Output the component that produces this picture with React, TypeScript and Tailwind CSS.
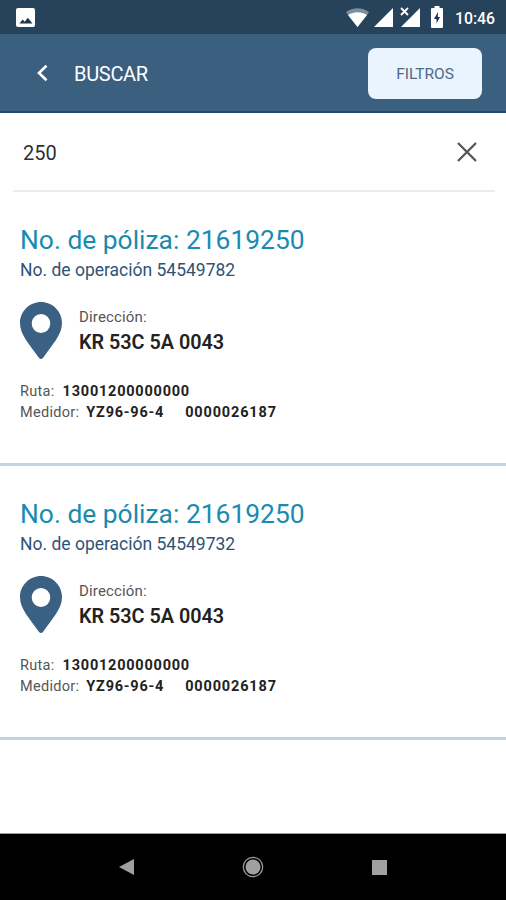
import type { ReactNode } from "react";

interface Policy {
  policy: string;
  operation: string;
  address: string;
  route: string;
  meter: string;
  serial: string;
}

const results: Policy[] = [
  {
    policy: "21619250",
    operation: "54549782",
    address: "KR 53C 5A 0043",
    route: "13001200000000",
    meter: "YZ96-96-4",
    serial: "0000026187",
  },
  {
    policy: "21619250",
    operation: "54549732",
    address: "KR 53C 5A 0043",
    route: "13001200000000",
    meter: "YZ96-96-4",
    serial: "0000026187",
  },
];

// Status Bar Component
function StatusBar() {
  return (
    <div className="h-[34px] bg-[#27435c] flex items-center pl-4 pr-[10px] text-white">
      <svg className="w-[19px] h-[19px]" viewBox="0 0 19 19">
        <rect width="19" height="19" rx="2" fill="#fff" />
        <path d="M3.500 15.500l3-4 2.300 2.300 3-4 4.700 5.700z" fill="#1d3650" />
      </svg>
      <svg className="w-[23px] h-[19px] ml-auto mt-px" viewBox="0 0 23 19">
        <path d="M0 4.200C6.500-1 16.500-1 23 4.200L11.500 19z" fill="#7b8fa2" />
        <path d="M2 7c6-3.600 13-3.600 19 0l-9.500 12z" fill="#fff" />
      </svg>
      <svg className="w-[19px] h-[19px] ml-[5px] mt-px" viewBox="0 0 19 19">
        <path d="M0 19L19 0v19z" fill="#fff" />
      </svg>
      <svg className="w-[20px] h-[20px] ml-[7px]" viewBox="0 0 20 20">
        <path d="M1 20L20 1v19z" fill="#fff" />
        <path d="M0 0h10.500L0 10.500z" fill="#27435c" />
        <path d="M1 1l7 7M8 1l-7 7" stroke="#fff" strokeWidth="1.800" />
      </svg>
      <svg className="w-[12px] h-[22px] ml-[11px]" viewBox="0 0 12 22">
        <path d="M3.500 0h5v2H11a1 1 0 011 1v18a1 1 0 01-1 1H1a1 1 0 01-1-1V3a1 1 0 011-1h2.500z" fill="#fff" />
        <path d="M7 6l-4 7h2.500v4.500L9 11H6.800z" fill="#1d2f55" />
      </svg>
      <span className="ml-[12px] mt-[3px] w-[41px] text-[15.800px] leading-none font-medium whitespace-nowrap">
        10:46
      </span>
    </div>
  );
}

// Header Component
function Header() {
  return (
    <header className="h-[79px] bg-[#3b5f7e] border-b-2 border-[#214a6c] flex items-center pl-[36px] pr-6">
      <svg className="w-3 h-[18px] mt-px" viewBox="0 0 12 18" fill="none">
        <path d="M10.500 1.800L3 9l7.500 7.200" stroke="#fff" strokeWidth="2.600" />
      </svg>
      <h1 className="ml-[26px] mt-[3px] text-[20px] leading-none tracking-[-0.3px] text-white">BUSCAR</h1>
      <button className="ml-auto mt-[2px] pt-[3px] w-[114px] h-[51px] rounded-[8px] bg-[#e9f4ff] text-[15.500px] text-[#4f6a82]">
        FILTROS
      </button>
    </header>
  );
}

// Search Component
function SearchField() {
  return (
    <div className="h-[79px] ml-[13px] mr-[11px] border-b-2 border-[#ececec] flex items-center pl-[10px] pr-[18px]">
      <span className="mt-[2px] text-[20px] leading-none text-[#303030]">250</span>
      <svg className="size-5 ml-auto" viewBox="0 0 20 20">
        <path d="M1 1l18 18M19 1L1 19" stroke="#555" strokeWidth="2.300" />
      </svg>
    </div>
  );
}

interface DetailLineProps {
  label: string;
  children: ReactNode;
}

// Detail Line Component
function DetailLine({ label, children }: DetailLineProps) {
  return (
    <p className="flex text-[14.500px] leading-[21px] text-[#555]">
      <span className="tracking-[0.3px]">{label}</span>
      {children}
    </p>
  );
}

function PolicyCard({ policy, operation, address, route, meter, serial }: Policy) {
  return (
    <li className="h-[274px] border-b-[3px] border-[#c3d4e1] pl-5 pt-[32px] whitespace-nowrap">
      <h2 className="text-[26.400px] leading-8 text-[#1a8bb0]">No. de póliza: {policy}</h2>
      <p className="text-[17.500px] leading-7 text-[#2f5375]">No. de operación {operation}</p>

      {/* Address */}
      <div className="mt-[18px] flex">
        <svg className="w-[42px] h-[57px]" viewBox="0 0 43 57" preserveAspectRatio="none">
          <path
            d="M21.500 0C9.600 0 0 9.400 0 21c0 12 10 21.500 19.300 34.800a2.600 2.600 0 004.400 0C33 42.500 43 33 43 21 43 9.400 33.400 0 21.500 0zm0 12a9.500 9.500 0 110 19 9.500 9.500 0 010-19z"
            fill="#3a6184"
            fillRule="evenodd"
          />
        </svg>
        <div className="ml-[17px] pt-[6px]">
          <p className="text-[15px] leading-[18px] tracking-[0.150px] text-[#555]">Dirección:</p>
          <p className="mt-[5px] text-[19.800px] leading-6 font-semibold text-[#222]">{address}</p>
        </div>
      </div>

      <div className="mt-[22px]">
        <DetailLine label="Ruta:">
          <b className="ml-[8px] tracking-[0.780px] text-[#222]">{route}</b>
        </DetailLine>
        <DetailLine label="Medidor:">
          <b className="ml-[7px] tracking-[0.780px] text-[#222]">{meter}</b>
          <b className="ml-[21px] tracking-[0.850px] text-[#222]">{serial}</b>
        </DetailLine>
      </div>
    </li>
  );
}

// Android Navigation Component
function NavigationBar() {
  return (
    <nav className="h-[67px] bg-black border-t border-[#999] flex items-center justify-between pl-[119px] pr-[119px]">
      <svg className="w-[15px] h-4" viewBox="0 0 15 16">
        <path d="M0 8L15 0v16z" fill="#a0a0a0" />
      </svg>
      <svg className="size-[22px]" viewBox="0 0 22 22">
        <circle cx="11" cy="11" r="9.700" fill="none" stroke="#999" strokeWidth="1.300" />
        <circle cx="11" cy="11" r="7.500" fill="#a0a0a0" />
      </svg>
      <div className="size-[15px] bg-[#a0a0a0]" />
    </nav>
  );
}

export default function App() {
  return (
    <div className="w-full h-[900px] flex flex-col overflow-hidden bg-white font-[Roboto,sans-serif]">
      <StatusBar />
      <Header />
      <SearchField />
      <ul className="flex-1">
        {results.map((item) => (
          <PolicyCard key={item.operation} {...item} />
        ))}
      </ul>
      <NavigationBar />
    </div>
  );
}
